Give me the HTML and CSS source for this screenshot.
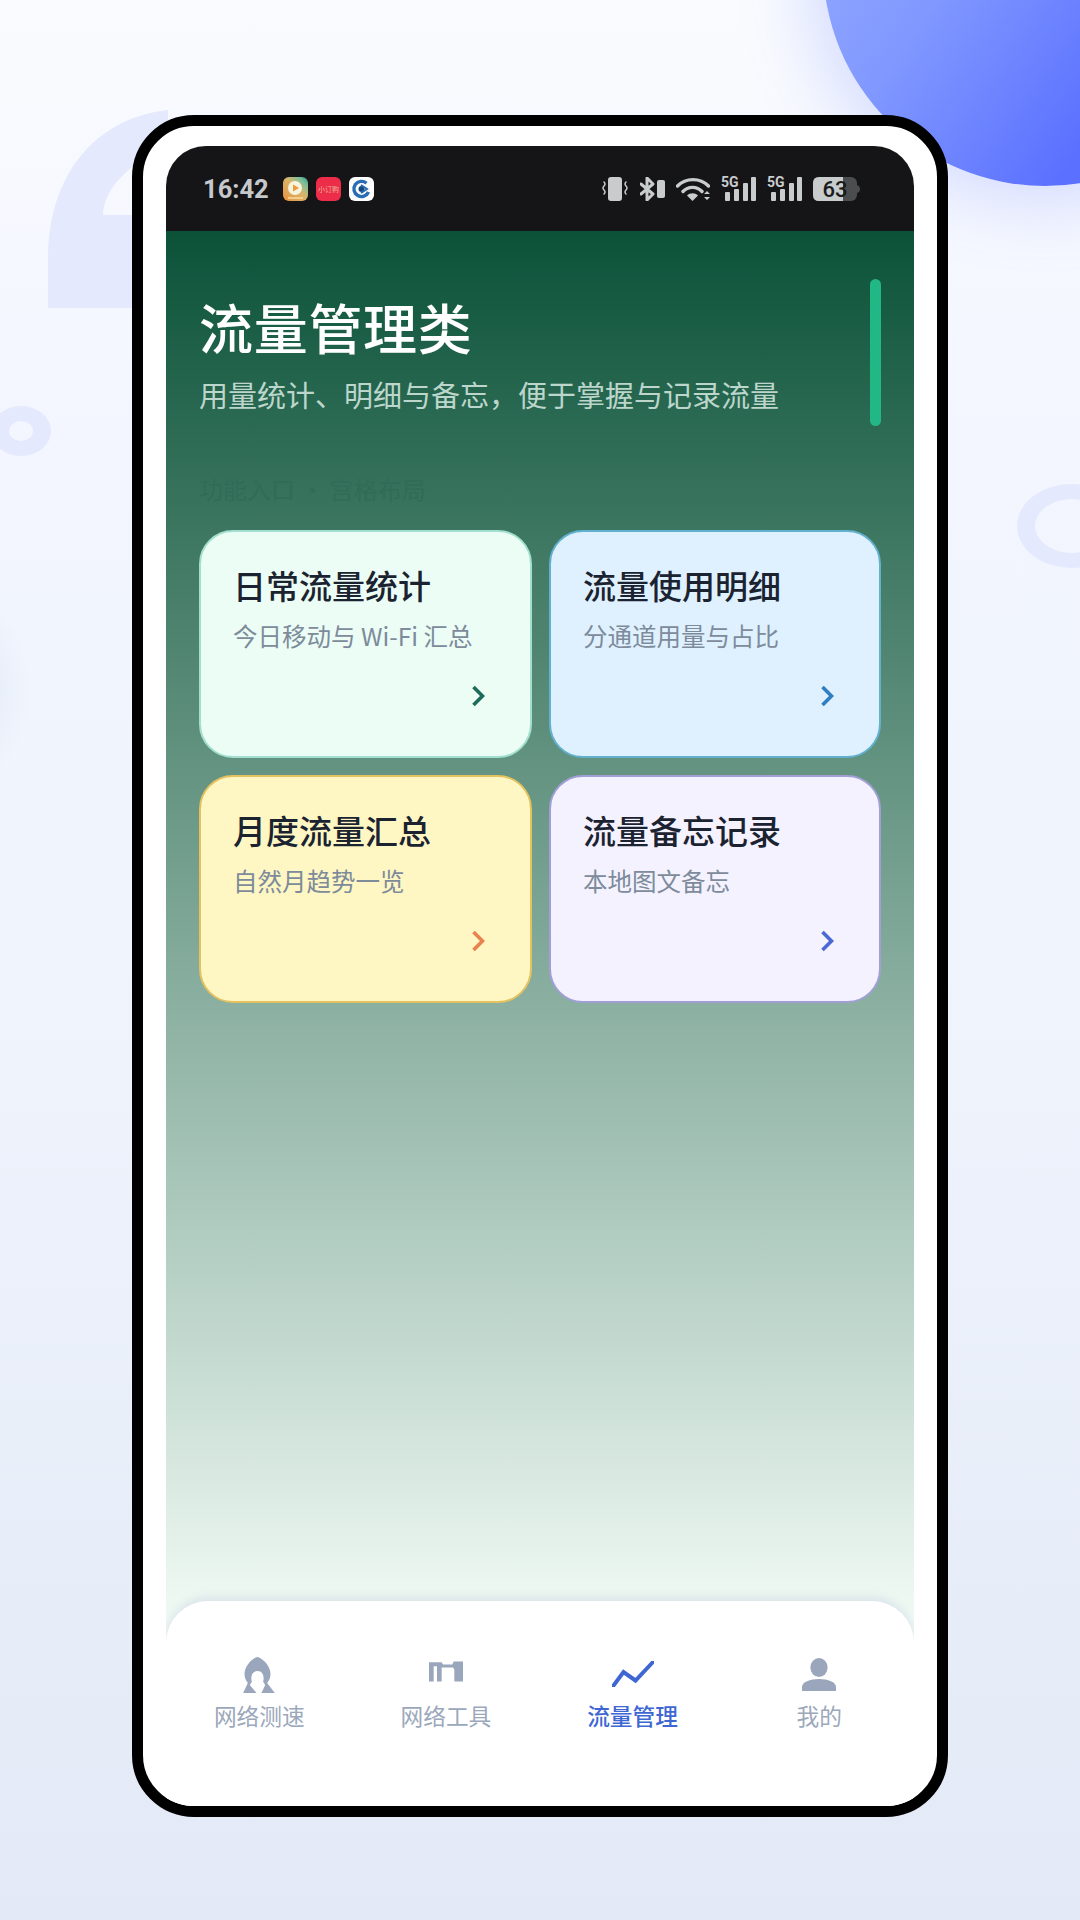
FILE: index.html
```html
<!DOCTYPE html>
<html lang="zh-CN">
<head>
<meta charset="utf-8">
<title>流量管理类</title>
<link rel="stylesheet" href="styles.css">
</head>
<body>
<div class="page">
  <div class="blob"></div>
  <div class="glow"></div>
  <svg class="deco deco-arch" viewBox="0 0 122 198"><path d="M0 198V150C0 65 47 8 120 0V40C82 50 55 80 55 105H122V198Z"/></svg>
  <div class="deco-ring ring-left"></div>
  <div class="deco-ring ring-right"></div>

  <div class="phone">
    <div class="screen">
      <div class="statusbar">
        <div class="status-left">
          <span class="time">16:42</span>
          <svg class="app-icon" viewBox="0 0 25 24">
            <defs><linearGradient id="a1" x1="0" y1="1" x2="1" y2="0"><stop offset="0" stop-color="#e8923f"/><stop offset=".55" stop-color="#d9b56a"/><stop offset=".8" stop-color="#7cbf9a"/><stop offset="1" stop-color="#2f9c7e"/></linearGradient></defs>
            <rect width="25" height="24" rx="6" fill="url(#a1)"/>
            <circle cx="12" cy="11" r="7" fill="#f6f3df"/>
            <path d="M10 7.500l6 3.500-6 3.500z" fill="#ee9a3a"/>
            <rect x="5" y="20" width="15" height="2" fill="#f3cd8c"/>
          </svg>
          <span class="app-icon app-red">小订购</span>
          <svg class="app-icon" viewBox="0 0 25 24">
            <rect width="25" height="24" rx="6" fill="#fdfdfd"/>
            <path d="M17.500 6.200A7.600 7.600 0 1 0 19.500 15" fill="none" stroke="#2a6cb5" stroke-width="3.400"/>
            <circle cx="12.500" cy="12" r="3" fill="#17497f"/>
            <path d="M12 8l6 4-6 4" fill="none" stroke="#2a6cb5" stroke-width="2"/>
          </svg>
        </div>
        <div class="status-right">
          <svg class="si si-vib" viewBox="0 0 26 24">
            <rect x="6" y="0" width="14" height="24" rx="3" class="si-fill"/>
            <path d="M2 5q2 2 0 4t0 4q2 2 0 4M24 5q-2 2 0 4t0 4q-2 2 0 4" class="si-line"/>
          </svg>
          <svg class="si si-bt" viewBox="0 0 25 24">
            <path d="M1 7l12 10-6 6V1l6 6L1 17" class="si-line si-thick"/>
            <rect x="17" y="3" width="8" height="18" rx="2" class="si-fill"/>
          </svg>
          <svg class="si si-wifi" viewBox="0 0 34 24">
            <path d="M1.500 9C10 .5 24 .5 32.500 9M7 14.500C12 9 21 9 26 14.500" class="si-line si-wide"/>
            <path d="M11 18.500C14 15.500 19 15.500 22 18.500L16.500 24Z" class="si-fill"/>
            <path d="M28 17l3-3 3 3zM28 20l3 3 3-3z" class="si-fill"/>
          </svg>
          <div class="sig">
            <span class="sig-5g">5G</span>
            <svg class="si si-sig" viewBox="0 0 35 24">
              <rect x="4" y="15" width="5" height="9" rx="1" class="si-fill"/>
              <rect x="13" y="12" width="5" height="12" rx="1" class="si-fill"/>
              <rect x="22" y="6" width="5" height="18" rx="1" class="si-fill"/>
              <rect x="30" y="0" width="5" height="24" rx="1" class="si-fill"/>
            </svg>
          </div>
          <div class="sig">
            <span class="sig-5g">5G</span>
            <svg class="si si-sig" viewBox="0 0 35 24">
              <rect x="4" y="15" width="5" height="9" rx="1" class="si-fill"/>
              <rect x="13" y="12" width="5" height="12" rx="1" class="si-fill"/>
              <rect x="22" y="6" width="5" height="18" rx="1" class="si-fill"/>
              <rect x="30" y="0" width="5" height="24" rx="1" class="si-fill"/>
            </svg>
          </div>
          <svg class="si si-bat" viewBox="0 0 47 24">
            <rect x="0" y="0" width="44" height="24" rx="6" fill="#4b4d4f"/>
            <path d="M44 8q3 1 3 4t-3 4z" fill="#4b4d4f"/>
            <path d="M6 0H30V24H6Q0 24 0 18V6Q0 0 6 0Z" fill="#c9cccd"/>
            <text x="22" y="19.500" class="bat-num">63</text>
          </svg>
        </div>
      </div>

      <div class="body">
        <div class="main">
          <span class="accent"></span>
          <h1 class="title">流量管理类</h1>
          <p class="subtitle">用量统计、明细与备忘，便于掌握与记录流量</p>
          <p class="section">功能入口 · 宫格布局</p>
          <div class="grid">
            <div class="card card-green">
              <h2 class="card-title">日常流量统计</h2>
              <p class="card-sub">今日移动与 Wi-Fi 汇总</p>
              <svg class="chev" viewBox="0 0 14 22"><path d="M2.500 2l9 9-9 9"/></svg>
            </div>
            <div class="card card-blue">
              <h2 class="card-title">流量使用明细</h2>
              <p class="card-sub">分通道用量与占比</p>
              <svg class="chev" viewBox="0 0 14 22"><path d="M2.500 2l9 9-9 9"/></svg>
            </div>
            <div class="card card-yellow">
              <h2 class="card-title">月度流量汇总</h2>
              <p class="card-sub">自然月趋势一览</p>
              <svg class="chev" viewBox="0 0 14 22"><path d="M2.500 2l9 9-9 9"/></svg>
            </div>
            <div class="card card-violet">
              <h2 class="card-title">流量备忘记录</h2>
              <p class="card-sub">本地图文备忘</p>
              <svg class="chev" viewBox="0 0 14 22"><path d="M2.500 2l9 9-9 9"/></svg>
            </div>
          </div>
        </div>

        <nav class="nav">
          <div class="nav-item">
            <span class="nav-icon"><svg class="ni ni-speed" viewBox="0 0 95 108"><path d="M43 0C60 4 82 28 82 50C82 62 78 70 72 78L95 108H55L66 84L60 74C64 60 60 42 43 42C26 42 22 60 26 74L20 84L40 108H0L14 78C8 70 4 62 4 50C4 28 26 4 43 0Z"/></svg></span>
            <span class="nav-label">网络测速</span>
          </div>
          <div class="nav-item">
            <span class="nav-icon"><svg class="ni ni-tool" viewBox="0 0 102 60"><path d="M0 2H38L42 9L70 9L74 0H102V60H76V24L72 18H38V60H24V14H14V60H0Z"/></svg></span>
            <span class="nav-label">网络工具</span>
          </div>
          <div class="nav-item nav-active">
            <span class="nav-icon"><svg class="ni ni-flow" viewBox="0 0 42 26"><polyline points="1.500,24.500 11.500,11 23.500,19.500 40.500,1.500"/></svg></span>
            <span class="nav-label">流量管理</span>
          </div>
          <div class="nav-item">
            <span class="nav-icon"><svg class="ni ni-me" viewBox="0 0 34 33"><ellipse cx="17" cy="9.500" rx="8.600" ry="9.500"/><path d="M0 33V29C0 24 8 21 17 21C26 21 34 24 34 29V33Z"/></svg></span>
            <span class="nav-label">我的</span>
          </div>
        </nav>
      </div>
    </div>
  </div>
</div>
</body>
</html>
```
FILE: styles.css
```css
* { box-sizing: border-box; }
html, body { margin: 0; padding: 0; }
body { font-family: "Noto Sans CJK SC", "Noto Sans", sans-serif; }

.page {
  position: relative;
  width: 1080px;
  height: 1920px;
  overflow: hidden;
  padding-top: 115px;
  background: linear-gradient(180deg, #f9fbfe 0%, #f3f6ff 22%, #eef3fc 55%, #e3e9f6 100%);
}

.blob {
  position: absolute;
  left: 823px;
  top: -258px;
  width: 444px;
  height: 444px;
  border-radius: 50%;
  background: linear-gradient(125deg, #9db2ff 0%, #8199ff 38%, #5b70ff 72%);
  box-shadow: 0 0 70px 15px rgba(125, 145, 255, .3);
}
.glow {
  position: absolute;
  left: -70px;
  top: 600px;
  width: 100px;
  height: 180px;
  border-radius: 50%;
  background: radial-gradient(closest-side, #e4ebf7, rgba(228, 235, 247, 0));
}
.deco-arch {
  position: absolute;
  left: 48px;
  top: 110px;
  width: 122px;
  height: 198px;
  fill: #e4e9fd;
}
.deco-ring {
  position: absolute;
  border-style: solid;
  border-color: #e4e9fd;
  border-radius: 50%;
}
.ring-left {
  left: -9px;
  top: 406px;
  width: 60px;
  height: 50px;
  border-width: 15px 18px;
}
.ring-right {
  left: 1017px;
  top: 484px;
  width: 110px;
  height: 84px;
  border-width: 15px 18px;
}

.phone {
  position: relative;
  width: 816px;
  height: 1702px;
  margin-left: 132px;
  border: 11px solid #000;
  border-radius: 62px;
  background: #fff;
  padding: 20px 23px 0;
  overflow: hidden;
}
.screen {
  height: 100%;
  display: flex;
  flex-direction: column;
  border-radius: 40px 40px 0 0;
  overflow: hidden;
}

.statusbar {
  flex: 0 0 85px;
  background: #151517;
  display: flex;
  align-items: flex-start;
  justify-content: space-between;
  padding: 31px 54px 0 37px;
}
.status-left { display: flex; align-items: center; }
.time {
  font-family: Roboto, sans-serif;
  font-size: 25.500px;
  font-weight: 700;
  line-height: 24px;
  color: #c6c9cc;
  width: 80px;
}
.app-icon {
  width: 25px;
  height: 24px;
  margin-right: 8px;
  display: block;
}
.app-red {
  background: #ec2c48;
  border-radius: 6px;
  color: #f2b59a;
  font-size: 7px;
  line-height: 24px;
  text-align: center;
  white-space: nowrap;
  overflow: hidden;
}
.status-right { display: flex; align-items: center; gap: 11px; }
.si { height: 24px; display: block; }
.si-vib { width: 26px; }
.si-bt { width: 25px; margin-left: 1px; }
.si-wifi { width: 34px; }
.si-sig { width: 35px; }
.si-bat { width: 47px; }
.si-fill { fill: #c9cccd; }
.si-line { fill: none; stroke: #c9cccd; stroke-width: 1.500; stroke-linecap: round; stroke-linejoin: round; }
.si-thick { stroke-width: 3; }
.si-wide { stroke-width: 3.400; }
.sig { position: relative; width: 35px; height: 24px; }
.sig-5g {
  position: absolute;
  left: 0;
  top: 0;
  font-family: Roboto, sans-serif;
  font-size: 14px;
  font-weight: 700;
  line-height: 11px;
  color: #c9cccd;
}
.bat-num {
  font-family: Roboto, sans-serif;
  font-size: 22px;
  font-weight: 500;
  fill: #1a1b1d;
  text-anchor: middle;
}

.body {
  flex: 1;
  min-height: 0;
  display: flex;
  flex-direction: column;
  background: linear-gradient(180deg, #0b5239 0, #f0faf4 1385px);
}
.main {
  position: relative;
  flex: 1;
  padding: 66px 33px 0 33px;
}
.accent {
  position: absolute;
  right: 33px;
  top: 48px;
  width: 11px;
  height: 147px;
  border-radius: 6px;
  background: #22b886;
}
.title {
  margin: 0;
  font-size: 54px;
  font-weight: 500;
  line-height: 60px;
  letter-spacing: .7px;
  color: #fff;
}
.subtitle {
  margin: 19px 0 0;
  font-size: 29px;
  font-weight: 400;
  line-height: 36px;
  color: #bcd6cb;
}
.section {
  margin: 59px 0 0;
  font-size: 24px;
  line-height: 36px;
  color: #316c58;
}
.grid {
  margin-top: 23px;
  display: grid;
  grid-template-columns: 333px 332px;
  grid-auto-rows: 228px;
  column-gap: 17px;
  row-gap: 17px;
}
.card {
  display: flex;
  flex-direction: column;
  padding: 30px 45px 0 32px;
  border: 2px solid;
  border-radius: 34px;
}
.card-title {
  margin: 0;
  font-size: 33px;
  font-weight: 500;
  line-height: 46px;
  color: #1b2331;
}
.card-sub {
  margin: 11px 0 0;
  font-size: 24.500px;
  line-height: 34px;
  color: #7d8b9b;
  white-space: nowrap;
}
.chev {
  align-self: flex-end;
  margin-top: 32px;
  width: 14px;
  height: 22px;
  fill: none;
  stroke-width: 3.600;
  stroke-linejoin: miter;
}
.card-green { background: #ebfdf5; border-color: #a3dfce; }
.card-green .chev { stroke: #1f6b5b; }
.card-blue { background: #dff1ff; border-color: #62b2cf; }
.card-blue .chev { stroke: #2f7fc0; }
.card-yellow { background: #fef7c3; border-color: #e3c25f; }
.card-yellow .chev { stroke: #e8824e; }
.card-violet { background: #f4f2ff; border-color: #a29fd6; }
.card-violet .chev { stroke: #4a67d2; }

.nav {
  flex: 0 0 205px;
  display: grid;
  grid-template-columns: repeat(4, 1fr);
  align-items: start;
  padding: 55px 1.500px 0 0;
  background: #fff;
  border-radius: 42px 42px 0 0;
  box-shadow: 0 -3px 10px rgba(110, 130, 190, .18);
}
.nav-item {
  display: flex;
  flex-direction: column;
  align-items: center;
  color: #9ba8bc;
}
.nav-icon {
  height: 37px;
  display: flex;
  align-items: center;
  justify-content: center;
}
.nav-label {
  margin-top: 8px;
  font-size: 22.700px;
  line-height: 30px;
  font-weight: 400;
}
.nav-active { color: #3f67d3; }
.nav-active .nav-label { font-weight: 500; }
.ni { display: block; fill: #9aa6bb; }
.ni-speed { width: 32px; height: 36px; }
.ni-tool { width: 34px; height: 21px; margin-bottom: 6px; }
.ni-flow { width: 42px; height: 26px; fill: none; stroke: #3f67d3; stroke-width: 4; stroke-linecap: round; stroke-linejoin: miter; margin-bottom: 1px; }
.ni-me { width: 34px; height: 33px; }
```
